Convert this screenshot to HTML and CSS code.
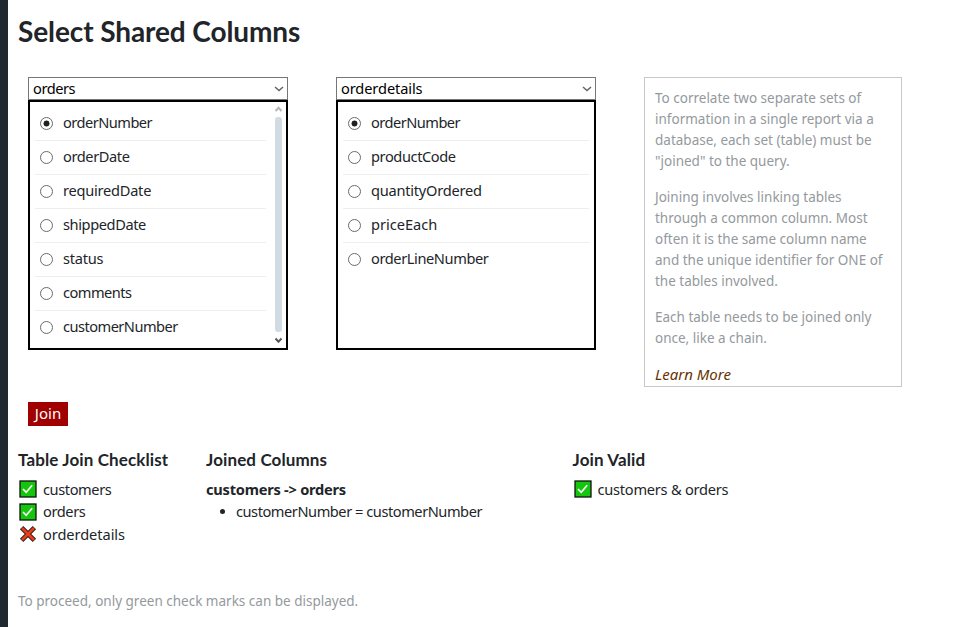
FILE: index.html
```
<!DOCTYPE html>
<html lang="en">
<head>
<meta charset="utf-8">
<title>Select Shared Columns</title>
<link rel="stylesheet" href="styles.css">
</head>
<body>
<svg class="defs" width="0" height="0" aria-hidden="true">
  <symbol id="check" viewBox="0 0 18 18"><rect x="1" y="1" width="16" height="16" fill="#16c60c" stroke="#111" stroke-width="1.3"/><path d="M4 9l3.2 3.2 6-7" fill="none" stroke="#fff" stroke-width="1.6"/></symbol>
  <symbol id="cross" viewBox="0 0 18 18"><path d="M2.6 2.6l12.8 12.8M15.4 2.6l-12.8 12.8" fill="none" stroke="#222" stroke-width="4.8"/><path d="M3 3l12 12M15 3l-12 12" fill="none" stroke="#f03a17" stroke-width="2.7"/></symbol>
  <symbol id="chevron" viewBox="0 0 10 6"><path d="M1 1l4 3.6L9 1" fill="none" stroke="#666" stroke-width="1.5"/></symbol>
</svg>
<main class="page">
  <h1 class="title">Select Shared Columns</h1>
  <div class="join-area">
    <section class="picker">
      <div class="select"><span>orders</span><svg class="chevron"><use href="#chevron"/></svg></div>
      <div class="options">
        <ul class="option-list">
          <li class="option"><i class="radio checked"></i><span class="tight">orderNumber</span></li>
          <li class="option"><i class="radio"></i><span>orderDate</span></li>
          <li class="option"><i class="radio"></i><span class="loose">requiredDate</span></li>
          <li class="option"><i class="radio"></i><span>shippedDate</span></li>
          <li class="option"><i class="radio"></i><span class="loose">status</span></li>
          <li class="option"><i class="radio"></i><span class="tight">comments</span></li>
          <li class="option"><i class="radio"></i><span class="tight">customerNumber</span></li>
        </ul>
        <div class="scrollbar">
          <svg width="7" height="6" viewBox="0 0 7 6"><path d="M.5 5L3.5 1.8 6.5 5" fill="none" stroke="#b8b8b8" stroke-width="2"/></svg>
          <div class="thumb"></div>
          <svg width="7" height="6" viewBox="0 0 7 6"><path d="M.5 1.5L3.5 4.7 6.5 1.5" fill="none" stroke="#555" stroke-width="2"/></svg>
        </div>
      </div>
    </section>
    <section class="picker">
      <div class="select"><span class="normal">orderdetails</span><svg class="chevron"><use href="#chevron"/></svg></div>
      <div class="options">
        <ul class="option-list">
          <li class="option"><i class="radio checked"></i><span class="tight">orderNumber</span></li>
          <li class="option"><i class="radio"></i><span>productCode</span></li>
          <li class="option"><i class="radio"></i><span class="loose">quantityOrdered</span></li>
          <li class="option"><i class="radio"></i><span class="normal">priceEach</span></li>
          <li class="option"><i class="radio"></i><span>orderLineNumber</span></li>
        </ul>
      </div>
    </section>
    <aside class="help">
      <p>To correlate two separate sets of<br>information in a single report via a<br>database, each set (table) must be<br>"joined" to the query.</p>
      <p>Joining involves linking tables<br>through a common column. Most<br>often it is the same column name<br>and the unique identifier for ONE of<br>the tables involved.</p>
      <p>Each table needs to be joined only<br>once, like a chain.</p>
      <a class="learn">Learn More</a>
    </aside>
  </div>
  <button class="join">Join</button>
  <div class="summary">
    <section>
      <h2>Table Join Checklist</h2>
      <div class="status"><svg><use href="#check"/></svg><span>customers</span></div>
      <div class="status"><svg><use href="#check"/></svg><span>orders</span></div>
      <div class="status"><svg><use href="#cross"/></svg><span class="normal">orderdetails</span></div>
    </section>
    <section>
      <h2>Joined Columns</h2>
      <div class="pair">customers -&gt; orders</div>
      <div class="match"><i class="dot"></i><span>customerNumber = customerNumber</span></div>
    </section>
    <section>
      <h2>Join Valid</h2>
      <div class="status"><svg><use href="#check"/></svg><span class="loose">customers &amp; orders</span></div>
    </section>
  </div>
  <p class="note">To proceed, only green check marks can be displayed.</p>
</main>
</body>
</html>
```
FILE: styles.css
```
* { box-sizing: border-box; }
body { margin: 0; background: #fff; color: #212529; font: 14.6px/22px "Noto Sans", sans-serif; }
.defs { position: absolute; }
.page { height: 627px; border-left: 8px solid #212930; padding: 13px 0 0 10px; overflow: hidden; }
.title { width: max-content; margin: 0; font: bold 28px/36px Lato, sans-serif; letter-spacing: -0.1px; }
.join-area { display: flex; align-items: flex-start; gap: 48px; height: 353px; padding: 28px 0 0 10px; }
.picker { width: 260px; }
.select { display: flex; align-items: center; justify-content: space-between; height: 23px; padding: 0 3px 0 4px; border: 1px solid #767676; color: #000; letter-spacing: -0.45px; }
.select span { padding-bottom: 2px; }
.select .normal { letter-spacing: -0.1px; }
.chevron { width: 10px; height: 6px; }
.options { display: flex; height: 250px; padding: 5px 5px 0; border: 2px solid #000; }
.option-list { flex: 1; margin: 0; padding: 0; list-style: none; }
.option { display: flex; align-items: center; height: 34px; padding-left: 5px; gap: 10px; border-bottom: 1px solid #eee; letter-spacing: -0.4px; }
.option:last-child { border-bottom-color: transparent; }
.option span { padding-bottom: 3px; }
.option .tight { letter-spacing: -0.52px; }
.loose { letter-spacing: -0.24px; }
.normal { letter-spacing: 0; }
.radio { width: 13px; height: 13px; border: 1.4px solid #6a6a6a; border-radius: 50%; }
.checked { background: radial-gradient(circle, #212121 2.7px, transparent 3.3px); }
.scrollbar { display: flex; flex-direction: column; align-items: center; width: 7px; margin: -1px -1px 0 9px; }
.thumb { flex: none; width: 7px; height: 215px; margin: 5px 0; border-radius: 3px; background: #d0dbe3; }
.help { width: 258px; height: 310px; padding: 10px; border: 1px solid #c8c8c8; color: #94999d; font-size: 13.5px; line-height: 21px; white-space: nowrap; }
.help p { margin: 0 0 15px; }
.learn { color: #663300; font-size: 15px; font-style: italic; }
.join { display: block; width: 40px; height: 24px; margin-left: 10px; padding: 0 0 2px; border: 0; background: #a00000; color: #fff; font: 15px/22px "Noto Sans", sans-serif; }
.summary { display: grid; grid-template-columns: 188px 366.5px 1fr; height: 164px; padding-top: 23px; }
h2 { margin: 0 0 8px; font: bold 17px/21px Lato, sans-serif; letter-spacing: 0.12px; }
.status { display: flex; align-items: center; gap: 6px; height: 22.5px; letter-spacing: -0.4px; }
.status svg { flex: none; width: 18px; height: 18px; margin-left: 1px; }
.status span { padding-bottom: 1px; }
.status .normal { letter-spacing: -0.06px; }
.pair { font-weight: bold; letter-spacing: -0.23px; }
.match { display: flex; align-items: center; gap: 11px; padding-left: 14px; letter-spacing: -0.45px; }
.dot { width: 5px; height: 5px; border-radius: 50%; background: #212529; }
.note { margin: 0; color: #94999d; font-size: 13.5px; }
```
